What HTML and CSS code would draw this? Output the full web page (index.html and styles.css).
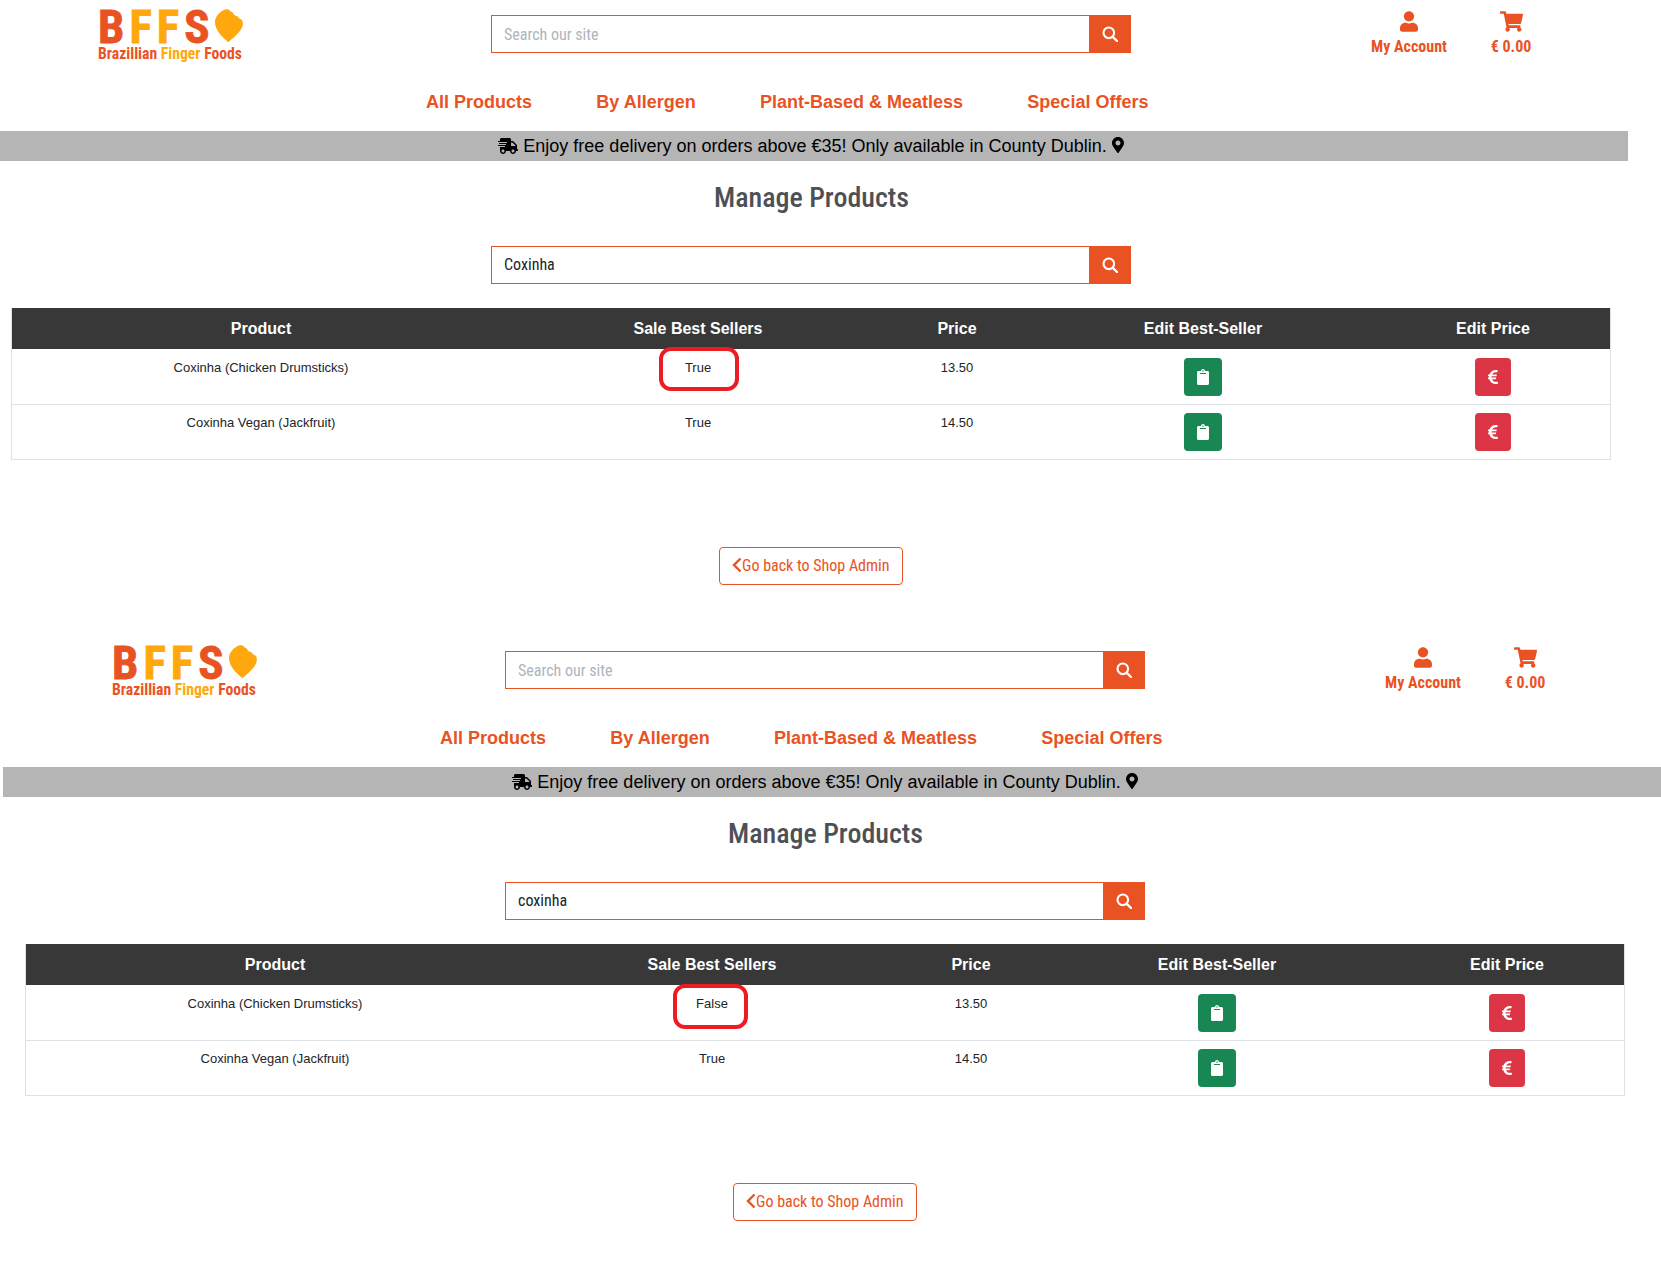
FILE: index.html
```html
<!DOCTYPE HTML>
<html>
<head>
<meta charset="utf-8">
<title>Manage Products</title>
<link rel="stylesheet" href="styles.css">
</head>
<body>
<svg class="defs" width="0" height="0">
	<symbol id="i-search" viewBox="0 0 16 16"><circle cx="6.8" cy="6.8" r="5.3" fill="none" stroke="currentColor" stroke-width="2.1"/><path d="M10.8 10.8l4.2 4.2" stroke="currentColor" stroke-width="2.4" stroke-linecap="round"/></symbol>
	<symbol id="i-user" viewBox="0 0 448 512"><path d="M224 256c70.7 0 128-57.3 128-128S294.7 0 224 0 96 57.3 96 128s57.3 128 128 128zm89.6 32h-16.7c-22.2 10.2-46.9 16-72.9 16s-50.6-5.8-72.9-16h-16.7C60.2 288 0 348.2 0 422.4V464c0 26.5 21.5 48 48 48h352c26.5 0 48-21.5 48-48v-41.6c0-74.2-60.2-134.4-134.4-134.4z"/></symbol>
	<symbol id="i-cart" viewBox="0 0 576 512"><path d="M528.12 301.319l47.273-208C578.806 78.301 567.391 64 551.99 64H159.208l-9.166-44.81C147.758 8.021 137.93 0 126.529 0H24C10.745 0 0 10.745 0 24v16c0 13.255 10.745 24 24 24h69.883l70.248 343.435C147.325 417.1 136 435.222 136 456c0 30.928 25.072 56 56 56s56-25.072 56-56c0-15.674-6.447-29.835-16.824-40h209.647C430.447 426.165 424 440.326 424 456c0 30.928 25.072 56 56 56s56-25.072 56-56c0-22.172-12.888-41.332-31.579-50.405l5.517-24.276c3.413-15.018-8.002-29.319-23.403-29.319H218.117l-6.545-32h293.145c11.206 0 20.92-7.754 23.403-18.681z"/></symbol>
	<symbol id="i-truck" viewBox="0 0 640 512"><path d="M624 352h-16V243.9c0-12.7-5.1-24.9-14.1-33.9L494 110.1c-9-9-21.2-14.1-33.9-14.1H416V48c0-26.5-21.5-48-48-48H112C85.5 0 64 21.5 64 48v48H8c-4.4 0-8 3.6-8 8v16c0 4.4 3.6 8 8 8h272c4.4 0 8 3.6 8 8v16c0 4.4-3.6 8-8 8H40c-4.4 0-8 3.6-8 8v16c0 4.4 3.6 8 8 8h208c4.4 0 8 3.6 8 8v16c0 4.4-3.6 8-8 8H8c-4.4 0-8 3.6-8 8v16c0 4.4 3.6 8 8 8h208c4.4 0 8 3.6 8 8v16c0 4.4-3.6 8-8 8H64v128c0 53 43 96 96 96s96-43 96-96h128c0 53 43 96 96 96s96-43 96-96h48c8.8 0 16-7.2 16-16v-32c0-8.8-7.2-16-16-16zM160 464c-26.5 0-48-21.5-48-48s21.5-48 48-48 48 21.5 48 48-21.5 48-48 48zm320 0c-26.5 0-48-21.5-48-48s21.5-48 48-48 48 21.5 48 48-21.5 48-48 48zm80-208H416V144h44.1l99.9 99.9V256z"/></symbol>
	<symbol id="i-pin" viewBox="0 0 384 512"><path d="M172.268 501.67C26.97 291.031 0 268.413 0 192 0 85.961 85.961 0 192 0s192 85.961 192 192c0 76.413-26.97 99.031-172.268 309.67-9.535 13.774-29.93 13.773-39.464 0zM192 272c44.183 0 80-35.817 80-80s-35.817-80-80-80-80 35.817-80 80 35.817 80 80 80z"/></symbol>
	<symbol id="i-clip" viewBox="0 0 384 512"><path d="M384 112v352c0 26.51-21.49 48-48 48H48c-26.51 0-48-21.49-48-48V112c0-26.51 21.49-48 48-48h80c0-35.29 28.71-64 64-64s64 28.71 64 64h80c26.51 0 48 21.49 48 48zM192 40c-13.255 0-24 10.745-24 24s10.745 24 24 24 24-10.745 24-24-10.745-24-24-24m96 114v-20a6 6 0 0 0-6-6H102a6 6 0 0 0-6 6v20a6 6 0 0 0 6 6h180a6 6 0 0 0 6-6z"/></symbol>
	<symbol id="i-euro" viewBox="0 0 320 512"><path d="M310.706 413.765c-1.314-6.63-7.835-10.872-14.424-9.369-10.692 2.439-27.422 5.413-45.426 5.413-56.763 0-101.929-34.79-121.461-85.449h113.689a12 12 0 0 0 11.708-9.369l6.373-28.36c1.686-7.502-4.019-14.631-11.708-14.631H115.22c-1.21-14.328-1.414-28.287.137-42.245H261.95a12 12 0 0 0 11.723-9.434l6.512-29.755c1.638-7.484-4.061-14.566-11.723-14.566H130.184c20.633-44.991 62.69-75.03 117.619-75.03 14.486 0 28.564 2.25 37.851 4.145 6.216 1.268 12.347-2.498 14.002-8.623l11.991-44.368c1.822-6.741-2.465-13.616-9.326-14.917C290.217 34.912 270.71 32 249.635 32 152.451 32 74.03 92.252 45.075 176H12c-6.627 0-12 5.373-12 12v29.755c0 6.627 5.373 12 12 12h21.569c-1.009 13.607-1.181 29.287-.181 42.245H12c-6.627 0-12 5.373-12 12v28.36c0 6.627 5.373 12 12 12h30.114C67.139 414.692 145.264 480 249.635 480c26.301 0 48.562-4.544 61.101-7.788 6.167-1.596 10.01-7.71 8.769-13.975l-8.799-44.472z"/></symbol>
	<symbol id="i-leaf" viewBox="0 0 30 35"><path d="M10 1C12 0 14 .5 15 1C16 3 17 3 19 4C20 7 22 7 24 8C25 11 28 10 29 13C31 20 24 27 14 35C7 29 0 22 0 14C0 8 5 3 10 1Z"/></symbol>
</svg>

<!-- first capture -->
<div class="shot shot-a">
	<div class="topbar">
		<a class="logo">
			<span class="logo-mark"><span class="logo-letters"><span class="red">B</span><span class="amber">FF</span><span class="red">S</span></span><svg class="leaf"><use href="#i-leaf"/></svg></span>
			<span class="logo-sub"><span class="red">Brazillian</span> <span class="amber">Finger</span> <span class="red">Foods</span></span>
		</a>
		<form class="search">
			<input class="search-input" type="text" placeholder="Search our site">
			<button class="search-btn" type="button"><svg><use href="#i-search"/></svg></button>
		</form>
		<div class="tools">
			<a class="tool tool-account"><svg class="tool-user"><use href="#i-user"/></svg><span>My Account</span></a>
			<a class="tool tool-bag"><svg class="tool-cart"><use href="#i-cart"/></svg><span>€ 0.00</span></a>
		</div>
	</div>
	<nav class="mainnav">
		<a>All Products</a>
		<a>By Allergen</a>
		<a>Plant-Based &amp; Meatless</a>
		<a>Special Offers</a>
	</nav>
	<div class="promo"><svg class="promo-truck"><use href="#i-truck"/></svg> Enjoy free delivery on orders above €35! Only available in County Dublin. <svg class="promo-pin"><use href="#i-pin"/></svg></div>
	<h2 class="page-title">Manage Products</h2>
	<form class="search search-page">
		<input class="search-input" type="text" value="Coxinha">
		<button class="search-btn" type="button"><svg><use href="#i-search"/></svg></button>
	</form>
	<table class="products">
		<thead>
			<tr><th>Product</th><th>Sale Best Sellers</th><th>Price</th><th>Edit Best-Seller</th><th>Edit Price</th></tr>
		</thead>
		<tbody>
			<tr>
				<td>Coxinha (Chicken Drumsticks)</td>
				<td class="marked">True<span class="mark mark-a"></span></td>
				<td>13.50</td>
				<td><a class="btn-edit btn-green"><svg class="ico-clip"><use href="#i-clip"/></svg></a></td>
				<td><a class="btn-edit btn-red"><svg class="ico-euro"><use href="#i-euro"/></svg></a></td>
			</tr>
			<tr>
				<td>Coxinha Vegan (Jackfruit)</td>
				<td>True</td>
				<td>14.50</td>
				<td><a class="btn-edit btn-green"><svg class="ico-clip"><use href="#i-clip"/></svg></a></td>
				<td><a class="btn-edit btn-red"><svg class="ico-euro"><use href="#i-euro"/></svg></a></td>
			</tr>
		</tbody>
	</table>
	<div class="back-row">
		<a class="btn-back"><svg viewBox="0 0 10 16"><path d="M8.500 1.500L2 8l6.500 6.500" fill="none" stroke="currentColor" stroke-width="2.400"/></svg>Go back to Shop Admin</a>
	</div>
</div>

<!-- second capture -->
<div class="shot shot-b">
	<div class="topbar">
		<a class="logo">
			<span class="logo-mark"><span class="logo-letters"><span class="red">B</span><span class="amber">FF</span><span class="red">S</span></span><svg class="leaf"><use href="#i-leaf"/></svg></span>
			<span class="logo-sub"><span class="red">Brazillian</span> <span class="amber">Finger</span> <span class="red">Foods</span></span>
		</a>
		<form class="search">
			<input class="search-input" type="text" placeholder="Search our site">
			<button class="search-btn" type="button"><svg><use href="#i-search"/></svg></button>
		</form>
		<div class="tools">
			<a class="tool tool-account"><svg class="tool-user"><use href="#i-user"/></svg><span>My Account</span></a>
			<a class="tool tool-bag"><svg class="tool-cart"><use href="#i-cart"/></svg><span>€ 0.00</span></a>
		</div>
	</div>
	<nav class="mainnav">
		<a>All Products</a>
		<a>By Allergen</a>
		<a>Plant-Based &amp; Meatless</a>
		<a>Special Offers</a>
	</nav>
	<div class="promo"><svg class="promo-truck"><use href="#i-truck"/></svg> Enjoy free delivery on orders above €35! Only available in County Dublin. <svg class="promo-pin"><use href="#i-pin"/></svg></div>
	<h2 class="page-title">Manage Products</h2>
	<form class="search search-page">
		<input class="search-input" type="text" value="coxinha">
		<button class="search-btn" type="button"><svg><use href="#i-search"/></svg></button>
	</form>
	<table class="products">
		<thead>
			<tr><th>Product</th><th>Sale Best Sellers</th><th>Price</th><th>Edit Best-Seller</th><th>Edit Price</th></tr>
		</thead>
		<tbody>
			<tr>
				<td>Coxinha (Chicken Drumsticks)</td>
				<td class="marked">False<span class="mark mark-b"></span></td>
				<td>13.50</td>
				<td><a class="btn-edit btn-green"><svg class="ico-clip"><use href="#i-clip"/></svg></a></td>
				<td><a class="btn-edit btn-red"><svg class="ico-euro"><use href="#i-euro"/></svg></a></td>
			</tr>
			<tr>
				<td>Coxinha Vegan (Jackfruit)</td>
				<td>True</td>
				<td>14.50</td>
				<td><a class="btn-edit btn-green"><svg class="ico-clip"><use href="#i-clip"/></svg></a></td>
				<td><a class="btn-edit btn-red"><svg class="ico-euro"><use href="#i-euro"/></svg></a></td>
			</tr>
		</tbody>
	</table>
	<div class="back-row">
		<a class="btn-back"><svg viewBox="0 0 10 16"><path d="M8.500 1.500L2 8l6.500 6.500" fill="none" stroke="currentColor" stroke-width="2.400"/></svg>Go back to Shop Admin</a>
	</div>
</div>
</body>
</html>
```

FILE: styles.css
```css
html, body {
	margin: 0;
	padding: 0;
	background: #fff;
	overflow-x: hidden;
}

body {
	font-family: "Liberation Sans", Arial, sans-serif;
	color: #212529;
}

a {
	text-decoration: none;
}

.defs {
	display: block;
	height: 0;
}

.shot {
	width: 1628px;
	height: 636px;
}

.shot-b {
	height: 626px;
	margin-left: 14px;
}

.shot-b .promo {
	margin-left: -11px;
	width: 1658px;
	padding-right: 14px;
}

.red {
	color: #e95324;
}

.amber {
	color: #ffa80d;
}

/* header */
.topbar {
	display: flex;
	height: 84px;
}

.logo {
	display: block;
	width: 491px;
	padding: 8px 0 0 98px;
	box-sizing: border-box;
}

.logo-mark {
	display: flex;
	align-items: flex-start;
	justify-content: space-between;
	width: 145px;
	height: 38px;
}

.logo-letters {
	font-family: "Liberation Sans Narrow", "Roboto Condensed", sans-serif;
	font-weight: 700;
	font-size: 47px;
	line-height: 38px;
	letter-spacing: 5px;
	-webkit-text-stroke: .8px currentColor;
}

.leaf {
	width: 30px;
	height: 35px;
	fill: #ffa80d;
}

.logo-sub {
	display: block;
	font-family: "Roboto Condensed", Roboto, sans-serif;
	font-stretch: condensed;
	font-weight: 700;
	font-size: 15.700px;
	line-height: 16px;
	white-space: nowrap;
}

.search {
	display: flex;
	width: 640px;
	height: 38px;
	margin-top: 15px;
}

.search-input {
	flex: 1;
	min-width: 0;
	box-sizing: border-box;
	height: 38px;
	padding: 0 12px;
	border: 1px solid #e95324;
	border-right: 0;
	border-radius: 0;
	outline: 0;
	font-family: "Roboto Condensed", Roboto, sans-serif;
	font-stretch: condensed;
	font-size: 16px;
	color: #212529;
}

.search-input::placeholder {
	color: #adb5bd;
}

.search-btn {
	display: flex;
	align-items: center;
	justify-content: center;
	width: 42px;
	height: 38px;
	padding: 0 1px 0 0;
	border: 0;
	background: #e95324;
	color: #fff;
}

.search-btn svg {
	width: 16px;
	height: 16px;
}

.tools {
	display: flex;
	padding: 11px 0 0 240px;
}

.tool {
	display: flex;
	flex-direction: column;
	align-items: center;
	font-family: "Roboto Condensed", Roboto, sans-serif;
	font-stretch: condensed;
	font-weight: 700;
	font-size: 16px;
	line-height: 24px;
	color: #e95324;
	fill: #e95324;
}

.tool span {
	margin-top: 3px;
}

.tool-account {
	width: 76px;
}

.tool-bag {
	width: 42px;
	margin-left: 43px;
}

.tool-user {
	width: 18px;
	height: 21px;
}

.tool-cart {
	width: 23px;
	height: 21px;
}

.mainnav {
	display: flex;
	gap: 64.300px;
	height: 47px;
	padding: 6px 0 0 426px;
	box-sizing: border-box;
	font-weight: 700;
	font-size: 18px;
	line-height: 24px;
}

.mainnav a {
	color: #e95324;
}

.promo {
	width: 1628px;
	height: 30px;
	padding-right: 6px;
	box-sizing: border-box;
	background: #b5b5b5;
	color: #000;
	font-size: 18px;
	line-height: 30px;
	text-align: center;
	white-space: nowrap;
}

.promo-truck {
	width: 20px;
	height: 16px;
	vertical-align: -2px;
}

.promo-pin {
	width: 12px;
	height: 16px;
	vertical-align: -1px;
}

.page-title {
	margin: 0;
	padding: 20px 0 0;
	height: 69px;
	width: 1623px;
	box-sizing: border-box;
	text-align: center;
	font-family: "Roboto Condensed", Roboto, sans-serif;
	font-stretch: condensed;
	font-weight: 500;
	font-size: 28px;
	line-height: 34px;
	color: #4d5054;
}

.search-page {
	margin: 16px 0 0 491px;
}

.search-page .search-input {
	padding-bottom: 2px;
}

/* table */
.products {
	table-layout: fixed;
	width: 1600px;
	margin: 24px 0 0 11px;
	border-collapse: collapse;
	border: 1px solid #dee2e6;
	border-top: 0;
	font-size: 13px;
}

.products th {
	height: 41px;
	padding: 0;
	background: #383838;
	color: #fff;
	font-size: 16px;
	font-weight: 700;
}

.products th:nth-child(1) { width: 498px; }
.products th:nth-child(2) { width: 376px; }
.products th:nth-child(3) { width: 142px; }
.products th:nth-child(4) { width: 350px; }

.products td {
	padding: 8px;
	height: 38px;
	line-height: 19px;
	border-bottom: 1px solid #dee2e6;
	text-align: center;
	vertical-align: top;
}

.products tbody tr:first-child td {
	padding-top: 9px;
}

.products th:last-child {
	padding-right: 2px;
}

.products td:last-child {
	padding-right: 10px;
}

.marked {
	position: relative;
}

.mark {
	position: absolute;
	left: 50%;
	box-sizing: border-box;
	border: 4px solid #ed1c24;
	border-radius: 12px;
}

.mark-a {
	top: -2px;
	width: 80px;
	height: 44px;
	margin-left: -39px;
}

.mark-b {
	top: -1px;
	width: 75px;
	height: 45px;
	margin-left: -39px;
}

.btn-edit {
	display: inline-flex;
	align-items: center;
	justify-content: center;
	height: 38px;
	border-radius: 4px;
	color: #fff;
	fill: #fff;
	vertical-align: top;
}

.btn-green {
	width: 38px;
	background: #198754;
}

.btn-red {
	width: 36px;
	background: #dc3545;
}

.ico-clip {
	width: 12px;
	height: 16px;
}

.ico-euro {
	width: 10px;
	height: 16px;
}

.back-row {
	margin-top: 87px;
	padding-left: 719px;
}

.btn-back {
	display: inline-flex;
	align-items: center;
	box-sizing: border-box;
	width: 184px;
	height: 38px;
	padding: 0 0 2px 12px;
	border: 1px solid #e95324;
	border-radius: 4px;
	background: #fff;
	color: #e95324;
	font-family: "Roboto Condensed", Roboto, sans-serif;
	font-stretch: condensed;
	font-size: 16px;
	white-space: nowrap;
}

.btn-back svg {
	width: 10px;
	height: 16px;
}
```
